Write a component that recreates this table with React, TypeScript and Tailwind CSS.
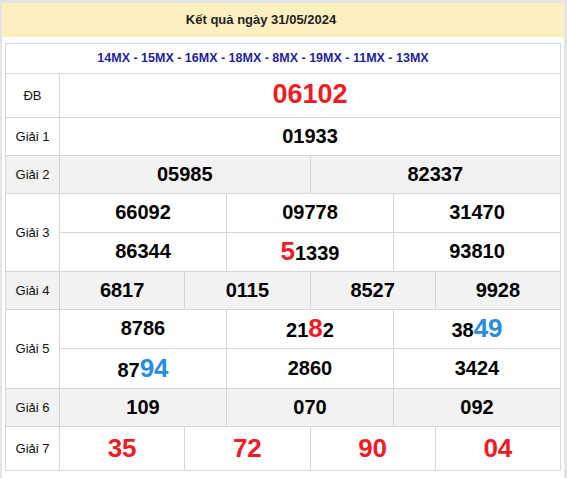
import React from 'react';

const cell = 'border border-[#d6d6d6] text-center align-middle';
const num = 'text-[20px] font-bold text-black leading-none pb-[2px]';

const Red = ({ children }: { children: React.ReactNode }) => (
  <span className="text-[26px] text-[#ee1c25]">{children}</span>
);
const Blue = ({ children }: { children: React.ReactNode }) => (
  <span className="text-[26px] text-[#2a8be2]">{children}</span>
);

type RowProps = {
  label: string;
  items: React.ReactNode[];
  span: number;
  gray?: boolean;
  h: string;
};

const PrizeRow: React.FC<RowProps> = ({ label, items, span, gray, h }) => (
  <tr className={gray ? 'bg-[#f2f2f2]' : 'bg-white'}>
    <td className={`${cell} ${h} text-[13px] text-[#111]`}>{label}</td>
    {items.map((it, i) => (
      <td key={i} colSpan={span} className={`${cell} ${num}`}>
        {it}
      </td>
    ))}
  </tr>
);

export default function App() {
  return (
    <div
      className="w-[567px] h-[478px] bg-white border-t-[3px] border-l-2 border-r-[3px] border-[#e4e4e4] overflow-hidden"
      style={{ fontFamily: '"Liberation Sans", Arial, sans-serif' }}
    >
      {/* Header */}
      <div className="h-[34px] bg-[#fcf0c0] flex items-center justify-center pr-[44px] text-[13px] font-bold text-[#222]">
        Kết quả ngày 31/05/2024
      </div>

      <table className="mt-[6px] ml-[3px] w-[556px] table-fixed border-collapse">
        <colgroup>
          <col className="w-[54px]" />
          {Array.from({ length: 12 }).map((_, i) => (
            <col key={i} />
          ))}
        </colgroup>
        <tbody>
          <tr>
            <td colSpan={13} className={`${cell} h-[30px] pr-[40px] text-[12.5px] font-bold text-[#1f1f9f]`}>
              14MX - 15MX - 16MX - 18MX - 8MX - 19MX - 11MX - 13MX
            </td>
          </tr>
          <tr>
            <td className={`${cell} h-[44px] text-[13px] text-[#111]`}>ĐB</td>
            <td colSpan={12} className={`${cell} text-[27px] font-bold text-[#ee1c25] leading-none pb-[2px]`}>
              06102
            </td>
          </tr>
          <PrizeRow label="Giải 1" items={['01933']} span={12} h="h-[38px]" />
          <PrizeRow label="Giải 2" items={['05985', '82337']} span={6} gray h="h-[38px]" />

          {/* Giải 3 */}
          <tr>
            <td rowSpan={2} className={`${cell} text-[13px] text-[#111]`}>Giải 3</td>
            <td colSpan={4} className={`${cell} ${num} h-[39px]`}>66092</td>
            <td colSpan={4} className={`${cell} ${num}`}>09778</td>
            <td colSpan={4} className={`${cell} ${num}`}>31470</td>
          </tr>
          <tr>
            <td colSpan={4} className={`${cell} ${num} h-[39px]`}>86344</td>
            <td colSpan={4} className={`${cell} ${num}`}>
              <Red>5</Red>1339
            </td>
            <td colSpan={4} className={`${cell} ${num}`}>93810</td>
          </tr>

          <PrizeRow label="Giải 4" items={['6817', '0115', '8527', '9928']} span={3} gray h="h-[38px]" />

          {/* Giải 5 */}
          <tr>
            <td rowSpan={2} className={`${cell} text-[13px] text-[#111]`}>Giải 5</td>
            <td colSpan={4} className={`${cell} ${num} h-[39px]`}>8786</td>
            <td colSpan={4} className={`${cell} ${num}`}>
              21<Red>8</Red>2
            </td>
            <td colSpan={4} className={`${cell} ${num}`}>
              38<Blue>49</Blue>
            </td>
          </tr>
          <tr>
            <td colSpan={4} className={`${cell} ${num} h-[40px]`}>
              87<Blue>94</Blue>
            </td>
            <td colSpan={4} className={`${cell} ${num}`}>2860</td>
            <td colSpan={4} className={`${cell} ${num}`}>3424</td>
          </tr>

          <PrizeRow label="Giải 6" items={['109', '070', '092']} span={4} gray h="h-[38px]" />

          <tr>
            <td className={`${cell} h-[44px] text-[13px] text-[#111]`}>Giải 7</td>
            {['35', '72', '90', '04'].map((n) => (
              <td key={n} colSpan={3} className={`${cell} text-[26px] font-bold text-[#ee1c25] leading-none pb-[2px]`}>
                {n}
              </td>
            ))}
          </tr>
        </tbody>
      </table>
    </div>
  );
}
